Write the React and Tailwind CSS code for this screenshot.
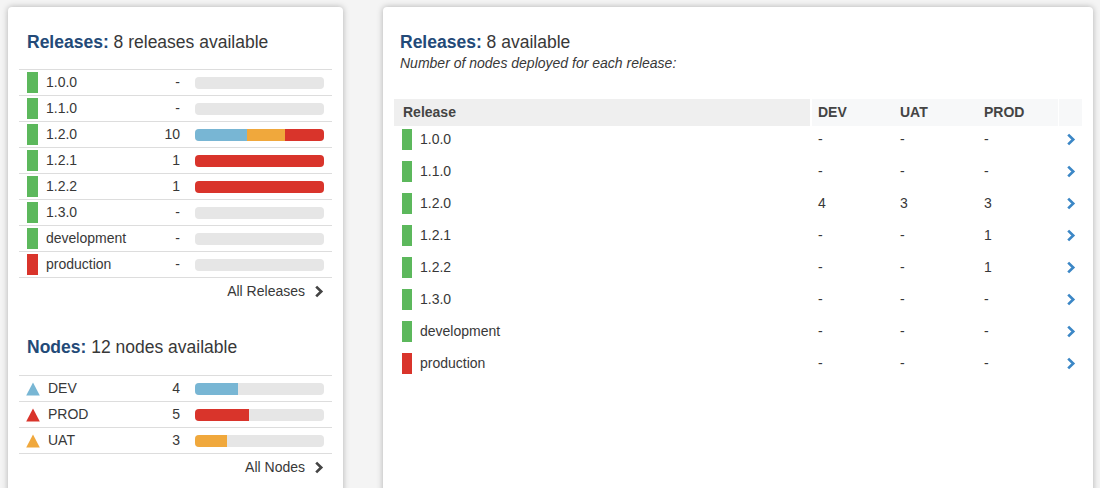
import React from "react";

const GREEN = "bg-[#5cb85c]";
const RED = "bg-[#d9342b]";

const releases = [
  { name: "1.0.0", color: GREEN, count: "-", dev: "-", uat: "-", prod: "-" },
  { name: "1.1.0", color: GREEN, count: "-", dev: "-", uat: "-", prod: "-" },
  { name: "1.2.0", color: GREEN, count: "10", dev: "4", uat: "3", prod: "3" },
  { name: "1.2.1", color: GREEN, count: "1", dev: "-", uat: "-", prod: "1" },
  { name: "1.2.2", color: GREEN, count: "1", dev: "-", uat: "-", prod: "1" },
  { name: "1.3.0", color: GREEN, count: "-", dev: "-", uat: "-", prod: "-" },
  { name: "development", color: GREEN, count: "-", dev: "-", uat: "-", prod: "-" },
  { name: "production", color: RED, count: "-", dev: "-", uat: "-", prod: "-" },
];

const nodes = [
  { name: "DEV", fill: "#78b6d4", bar: "bg-[#78b6d4]", count: 4 },
  { name: "PROD", fill: "#d9342b", bar: "bg-[#d9342b]", count: 5 },
  { name: "UAT", fill: "#f0a83c", bar: "bg-[#f0a83c]", count: 3 },
];

const Chevron = ({ className = "", color = "#444" }) => (
  <svg width="10" height="13" viewBox="0 0 10 13" className={className}>
    <path d="M2.2 1.6 L7.2 6.5 L2.2 11.4" fill="none" stroke={color} strokeWidth="2.7" />
  </svg>
);

// bar with segments for dev / uat / prod
const ReleaseBar = ({ r }) => {
  const total = parseInt(r.count) || 0;
  const segs = [
    { v: parseInt(r.dev) || 0, c: "bg-[#78b6d4]" },
    { v: parseInt(r.uat) || 0, c: "bg-[#f0a83c]" },
    { v: parseInt(r.prod) || 0, c: "bg-[#d9342b]" },
  ];
  return (
    <div className="ml-[15px] w-[129px] h-[12px] rounded-[4px] bg-[#e6e6e6] overflow-hidden flex">
      {total > 0 &&
        segs.map((s, i) =>
          s.v > 0 ? (
            <div key={i} className={`h-full ${s.c}`} style={{ width: `${(s.v / total) * 100}%` }} />
          ) : null
        )}
    </div>
  );
};

const App = () => {
  return (
    <div className="h-[488px] overflow-hidden bg-[#f4f4f4] flex gap-[40px] pl-[8px] pt-[7px] text-[#383838] font-['Liberation_Sans',Arial,sans-serif]">
      {/* Left panel */}
      <div className="w-[335px] h-[520px] bg-white rounded-[4px] shadow-[0_0_6px_rgba(0,0,0,0.28)] px-[11px] pt-[25px] shrink-0">
        <h2 className="px-2 text-[17.5px] leading-[20px]">
          <span className="font-bold text-[#234a78]">Releases:</span> 8 releases available
        </h2>
        <div className="mt-[17px] border-b border-[#dddddd]">
          {releases.map((r) => (
            <div key={r.name} className="h-[26px] border-t border-[#dddddd] flex items-center pl-2 pr-2 text-[14px]">
              <div className={`w-[11px] h-[21px] ${r.color}`} />
              <div className="ml-2 flex-1">{r.name}</div>
              <div className="w-[30px] text-right">{r.count}</div>
              <ReleaseBar r={r} />
            </div>
          ))}
        </div>
        <div className="flex justify-end items-center gap-[9px] pr-[8px] mt-[5px] h-[16px] text-[14px]">
          <span>All Releases</span>
          <Chevron />
        </div>

        <h2 className="px-2 mt-[38px] text-[17.5px] leading-[20px]">
          <span className="font-bold text-[#234a78]">Nodes:</span> 12 nodes available
        </h2>
        <div className="mt-[18px] border-b border-[#dddddd]">
          {nodes.map((n) => (
            <div key={n.name} className="h-[26px] border-t border-[#dddddd] flex items-center pl-[7px] pr-2 text-[14px]">
              <svg width="14" height="14" viewBox="0 0 14 14">
                <polygon points="7,0.5 13.8,13.5 0.2,13.5" fill={n.fill} />
              </svg>
              <div className="ml-2 flex-1">{n.name}</div>
              <div className="w-[30px] text-right">{n.count}</div>
              <div className="ml-[15px] w-[129px] h-[12px] rounded-[4px] bg-[#e6e6e6] overflow-hidden">
                <div className={`h-full ${n.bar}`} style={{ width: `${(n.count / 12) * 100}%` }} />
              </div>
            </div>
          ))}
        </div>
        <div className="flex justify-end items-center gap-[9px] pr-[8px] mt-[5px] h-[16px] text-[14px]">
          <span>All Nodes</span>
          <Chevron />
        </div>
      </div>

      {/* Right panel */}
      <div className="w-[710px] h-[520px] bg-white rounded-[4px] shadow-[0_0_6px_rgba(0,0,0,0.28)] px-[11px] pt-[25px] shrink-0">
        <h2 className="px-[6px] text-[17.5px] leading-[20px]">
          <span className="font-bold text-[#234a78]">Releases:</span> 8 available
        </h2>
        <p className="px-[6px] mt-[2px] text-[14px] leading-[18px] italic">
          Number of nodes deployed for each release:
        </p>

        <div className="mt-[27px] text-[14px]">
          <div className="grid grid-cols-[416px_82px_84px_82px_24px] h-[27px] font-bold text-[#444]">
            <div className="bg-[#efefef] pl-[9px] flex items-center">Release</div>
            <div className="bg-[#f7f8f9] border-l-2 border-white pl-[6px] flex items-center">DEV</div>
            <div className="bg-[#f7f8f9] pl-[8px] flex items-center">UAT</div>
            <div className="bg-[#f7f8f9] pl-[8px] flex items-center">PROD</div>
            <div className="bg-[#f7f8f9] border-l border-white" />
          </div>
          {releases.map((r) => (
            <div key={r.name} className="grid grid-cols-[416px_82px_84px_82px_24px] h-[32px] pt-[3px]">
              <div className="pl-2 flex items-center h-[21px]">
                <div className={`w-[10px] h-[21px] ${r.color}`} />
                <span className="ml-2">{r.name}</span>
              </div>
              <div className="pl-[8px] flex items-center h-[21px]">{r.dev}</div>
              <div className="pl-[8px] flex items-center h-[21px]">{r.uat}</div>
              <div className="pl-[8px] flex items-center h-[21px]">{r.prod}</div>
              <div className="flex items-center justify-end pr-[6px] h-[21px]">
                <Chevron color="#3c87c6" />
              </div>
            </div>
          ))}
        </div>
      </div>
    </div>
  );
};

export default App;
